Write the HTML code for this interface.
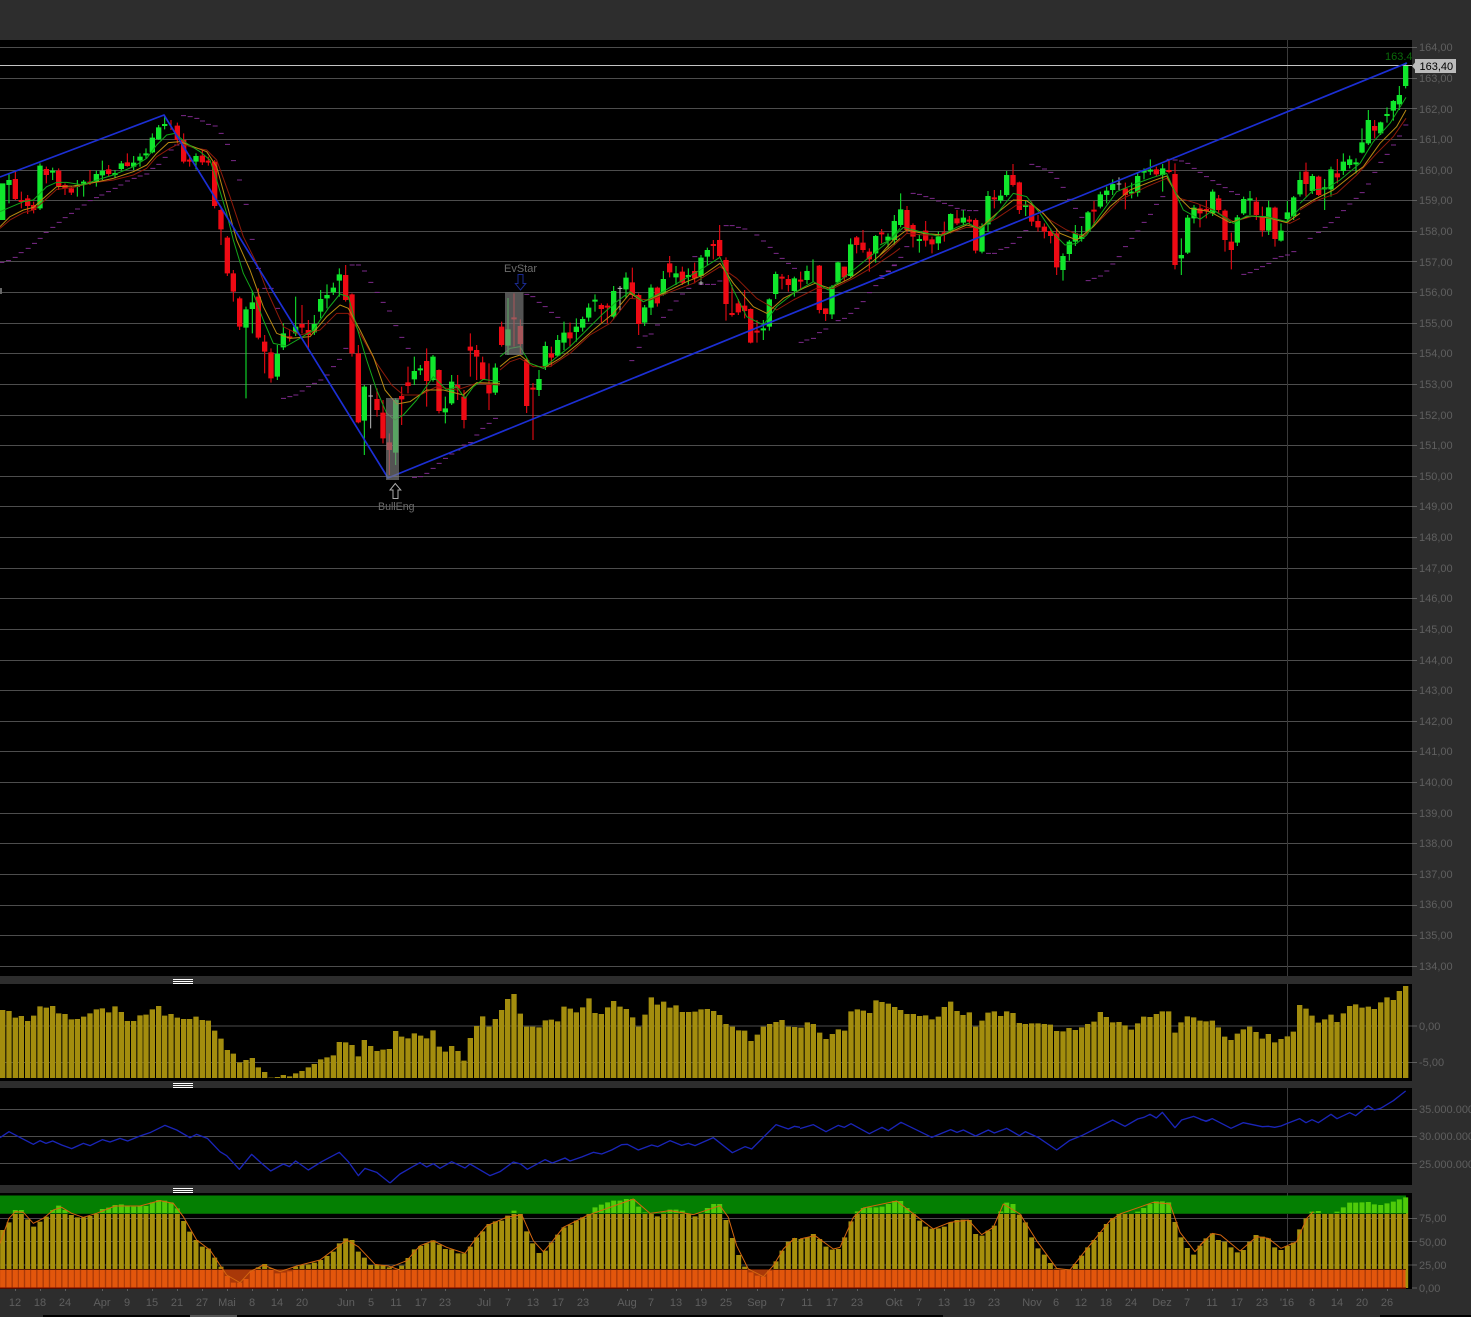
<!DOCTYPE html>
<html><head><meta charset="utf-8"><title>Chart</title>
<style>
html,body{margin:0;padding:0;background:#2d2d2d;width:1471px;height:1317px;overflow:hidden}
svg{display:block;font-family:"Liberation Sans",Arial,sans-serif;font-size:11px}
path,polyline{fill:none}
.g{stroke:#10e62c}.r{stroke:#ee0a14}.w{stroke-width:3.2}.b{stroke-width:16}
.s{stroke:#7d2a8c;stroke-width:3}
.mg,.mo,.mr{stroke-width:3;stroke-linejoin:round}
.mg{stroke:#13a81a}.mo{stroke:#b88a12}.mr{stroke:#8e1a0a}
.bl{stroke:#1a25b8;stroke-width:4;stroke-linejoin:round}
.ol{stroke:#d4660f;stroke-width:3;stroke-linejoin:round}
.ax{fill:#5f5f5f}
</style></head><body>
<svg width="1471" height="1317" viewBox="0 0 1471 1317" xmlns="http://www.w3.org/2000/svg">
<defs>
<clipPath id="cG"><rect x="0" y="1190" width="1412" height="23.5"/></clipPath>
<clipPath id="cO"><rect x="0" y="1213.5" width="1412" height="55.8"/></clipPath>
<clipPath id="cR"><rect x="0" y="1269.3" width="1405.5" height="19"/></clipPath>
<clipPath id="cO2"><rect x="1405.5" y="1269" width="6" height="19"/></clipPath>
<g id="bars4" style="stroke-width:15">
<path transform="translate(0 960) scale(.33333)" d="M8 810V984M27 787V984M46 750V984M64 750V984M83 778V984M101 800V984M120 785V984M139 770V984M158 750V984M176 737V984M195 750V984M214 765V984M232 772V984M251 772V984M270 768V984M289 760V984M307 747V984M326 743V984M345 735V984M364 733V984M382 738V984M401 740V984M420 738V984M438 738V984M457 727V984M476 720V984M494 722V984M513 727V984M532 745V984M551 783V984M569 815V984M588 840V984M607 860V984M625 866V984M644 893V984M663 920V984M682 948V984M700 968V984M719 968V984M738 957V984M757 932V984M775 922V984M794 912V984M813 925V984M832 940V984M850 938V984M869 934V984M887 920V984M906 915V984M925 913V984M943 908V984M962 900V984M981 888V984M1000 875V984M1018 850V984M1037 835V984M1056 840V984M1075 875V984M1093 893V984M1112 915V984M1131 915V984M1149 915V984M1168 922V984M1187 928V984"/>
<path transform="translate(390 984) scale(.33333)" d="M35 845V912M54 822V912M73 796V912M92 786V912M110 778V912M129 769V912M148 782V912M166 795V912M185 796V912M204 808V912M222 808V912M241 788V912M260 760V912M278 742V912M297 720V912M316 712V912M335 710V912M353 695V912M372 680V912M391 690V912M410 742V912M428 778V912M447 807V912M466 800V912M484 775V912M503 752V912M522 730V912M541 722V912M559 710V912M578 700V912M597 690V912M615 670V912M634 662V912M653 655V912M671 650V912M690 650V912M709 645V912M728 645V912M746 668V912M765 685V912M784 688V912M802 697V912M821 685V912M840 677V912M858 677V912M877 680V912M896 688V912M915 697V912M933 690V912M952 672V912M971 660V912M989 660V912M1008 708V912M1027 762V912M1046 813V912M1064 848V912M1083 865V912M1102 875V912M1120 878V912M1139 860V912M1158 832V912M1176 800V912M1195 773V912M1214 762V912"/>
<path transform="translate(800 984) scale(.33333)" d="M3 765V912M22 760V912M40 750V912M59 765V912M78 788V912M97 797V912M115 795V912M134 760V912M153 712V912M172 682V912M190 672V912M209 670V912M228 670V912M246 668V912M265 660V912M284 651V912M302 651V912M321 672V912M340 686V912M359 710V912M377 728V912M396 734V912M415 733V912M433 728V912M452 715V912M471 708V912M489 707V912M508 708V912M527 750V912M546 755V912M564 740V912M583 725V912M602 682V912M620 656V912M639 660V912M658 692V912M676 715V912M695 760V912M714 793V912M733 812V912M751 837V912M770 853V912M789 858V912M807 858V912M826 840V912M845 815V912M863 790V912M882 768V912M901 744V912M919 720V912M938 702V912M957 690V912M975 690V912M994 690V912M1013 683V912M1031 672V912M1050 660V912M1069 652V912M1087 652V912M1106 655V912M1125 714V912M1143 760V912M1162 792V912M1181 812V912M1200 785V912"/>
<path transform="translate(1200 960) scale(.33333)" d="M18 835V984M37 820V984M55 840V984M74 845V984M93 862V984M112 877V984M130 870V984M149 845V984M168 825V984M187 830V984M205 835V984M224 862V984M243 870V984M262 858V984M280 848V984M299 808V984M318 775V984M336 755V984M355 753V984M374 762V984M393 760V984M411 755V984M430 742V984M449 728V984M467 728V984M486 727V984M505 726V984M523 733V984M542 735V984M561 730V984M580 725V984M598 718V984M617 712V984"/>
</g>
</defs>

<!-- panels -->
<rect x="0" y="40" width="1412" height="936" fill="#000"/>
<rect x="0" y="984" width="1412" height="97" fill="#000"/>
<rect x="0" y="1088" width="1412" height="97" fill="#000"/>
<rect x="0" y="1193" width="1412" height="96" fill="#000"/>

<!-- main grid -->
<path stroke="#4d4d4d" stroke-width="1" d="M0 47.5H1412M0 78.5H1412M0 108.5H1412M0 139.5H1412M0 170.5H1412M0 200.5H1412M0 231.5H1412M0 261.5H1412M0 292.5H1412M0 323.5H1412M0 353.5H1412M0 384.5H1412M0 415.5H1412M0 445.5H1412M0 476.5H1412M0 506.5H1412M0 537.5H1412M0 568.5H1412M0 598.5H1412M0 629.5H1412M0 660.5H1412M0 690.5H1412M0 721.5H1412M0 751.5H1412M0 782.5H1412M0 813.5H1412M0 843.5H1412M0 874.5H1412M0 905.5H1412M0 935.5H1412M0 966.5H1412"/>
<path stroke="#3a3a3a" stroke-width="1" d="M1287.5 40V976M1287.5 984V1078M1287.5 1088V1185M1287.5 1193V1288"/>
<rect x="0" y="288" width="2" height="6" fill="#666"/>

<!-- Z1 -->
<g transform="translate(0 100) scale(.33333)">
<g transform="translate(-7 0)"><path class="s" d="M5 487h15M25 482h15M45 472h15M63 458h15M84 445h15M103 430h15M120 415h15M138 397h15M158 382h15M177 367h15M195 353h15M214 340h15M232 327h15M252 315h15M270 302h15M289 293h15M305 285h15M325 275h15M345 265h15M362 255h15M382 243h15M402 235h15M420 228h15M440 222h15M458 205h15M476 193h15M495 172h15M513 150h15M530 135h15M550 47h15M570 50h15M590 55h15M607 63h15M625 73h15M645 78h15M663 100h15M682 133h15M700 182h15M718 240h15M738 313h15M756 418h15M775 505h15M794 565h15M813 565h15M832 625h15M850 895h15M869 890h15M887 885h15M906 873h15M925 860h15M943 850h15M962 840h15M981 825h15M1000 800h15M1018 778h15M1037 745h15M1056 495h15M1075 495h15M1093 513h15M1112 547h15M1131 577h15M1149 607h15M1168 633h15M1187 677h15M1205 712h15M1224 745h15M1243 1132h15M1261 1130h15M1280 1120h15M1299 1105h15M1317 1090h15M1336 1075h15M1355 1062h15M1373 1050h15M1392 1035h15M1411 1028h15M1430 1005h15M1448 985h15M1467 970h15M1486 955h15"/></g>
<path class="g w" d="M27 222V310M120 190V330M158 203V240M232 240V290M251 240V290M289 212V260M307 182V240M345 210V235M364 183V212M401 168V210M420 160V200M438 145V175M457 100V160M476 75V120M494 50V88M588 160V208M738 620V895M757 572V700M832 735V840M850 670V750M887 590V708M943 645V705M962 570V655M981 553V625M1000 548V585M1018 505V590M1093 855V1065M1187 895V1095M1243 770V855M1261 795V825M1299 765V845M1336 890V970M1355 825V915M1486 790V885"/>
<path class="g b" d="M8 250V360M27 240V255M120 197V325M158 212V218M232 255V261M251 245V251M289 222V245M307 212V226M345 219V225M364 190V207M401 188V200M420 170V182M438 160V166M457 113V157M476 82V118M494 72V78M588 168V185M738 628V683M757 607V627M832 762V830M850 700V742M887 680V700M943 672V697M962 597V635M981 585V595M1000 563V577M1018 523V542M1093 860V962M1187 900V1058M1243 813V838M1261 805V811M1299 770V840M1336 925V937M1355 845V910M1486 803V878"/>
<path class="r w" d="M46 215V300M64 275V325M83 285V342M101 305V340M139 200V250M176 205V270M195 250V285M214 260V285M270 210V255M326 195V230M382 160V200M513 60V90M532 68V130M551 100V190M569 165V200M607 150V195M625 170V197M644 180V325M663 318V435M682 408V528M700 510V605M719 590V690M775 565V718M794 705V820M813 745V848M869 690V725M906 615V700M925 660V750M1037 495V605M1056 580V770M1075 735V970M1131 865V950M1149 900V1030M1168 1000V1125M1205 860V975M1224 800V880M1280 745V920M1317 808V940M1373 825V900M1392 870V985M1411 700V830M1430 735V840M1448 770V840M1467 790V930"/>
<path class="r b" d="M46 237V297M64 300V306M83 295V318M101 315V330M139 207V225M176 212V258M195 255V265M214 265V278M270 245V250M326 208V222M382 187V198M532 77V120M551 120V185M569 179V185M607 167V187M625 182V188M644 185V318M663 330V388M682 413V520M700 520V575M719 595V680M775 590V713M794 725V755M813 757V835M869 709V715M906 672V683M925 690V705M1037 525V600M1056 583V760M1075 760V967M1131 897V930M1149 938V1015M1168 1027V1050M1205 888V898M1224 847V858M1280 783V843M1317 810V933M1373 855V865M1392 890V960M1411 740V752M1430 750V770M1448 787V838M1467 855V880"/>
<path stroke="#bbb" stroke-width="3" d="M1112 855V985M1105 888H1119"/>
<polyline class="mr" points="0,385 30,360 70,338 100,330 130,305 170,268 220,262 280,248 340,240 400,225 440,205 470,170 510,145 540,130 580,143 620,150 650,180 690,290 730,410 770,490 800,570 850,680 900,705 960,690 1010,640 1045,640 1080,700 1130,790 1175,855 1210,885 1260,885 1310,860 1370,870 1430,850 1500,855"/>
<polyline class="mo" points="0,380 30,350 70,330 100,322 130,295 170,260 220,258 280,248 340,235 400,215 440,195 470,160 505,128 540,125 580,140 620,155 650,200 680,310 710,420 750,510 790,620 830,700 870,715 930,710 980,650 1020,615 1045,625 1080,690 1120,770 1155,870 1190,912 1230,905 1280,870 1330,870 1390,885 1430,848 1500,850"/>
<polyline class="mg" points="0,335 30,322 70,305 100,300 120,280 140,260 170,247 200,247 250,255 290,240 340,225 400,200 440,175 470,135 500,105 525,100 560,130 600,155 630,180 650,240 680,340 700,420 730,520 760,580 790,660 820,730 860,738 900,715 940,690 985,625 1020,582 1045,590 1070,680 1100,780 1130,870 1160,940 1185,960 1210,945 1250,900 1300,830 1340,870 1370,860 1395,895 1420,860 1450,838 1500,845"/>
</g>

<!-- Z5 -->
<g transform="translate(500 150) scale(.33333)">
<g transform="translate(-7 0)"><path class="s" d="M80 433h15M98 440h15M117 457h15M135 470h15M154 487h15M173 502h15M395 632h15M417 592h15M435 558h15M453 552h15M472 525h15M490 502h15M510 480h15M528 453h15M547 432h15M566 415h15M584 320h15M603 403h15M622 403h15M640 403h15M659 393h15M678 227h15M696 227h15M715 232h15M734 237h15M770 255h15M790 273h15M810 292h15M828 310h15M846 325h15M865 340h15M883 355h15M903 577h15M920 570h15M940 565h15M958 548h15M977 537h15M1014 512h15M1033 505h15M1052 490h15M1070 475h15M1089 455h15M1108 428h15M1127 407h15M1145 377h15M1164 363h15M1183 345h15"/></g>
<path class="g w" d="M24 444V615M117 660V738M136 575V660M173 555V620M192 515V600M229 505V575M248 500V545M266 460V515M285 433V485M341 408V508M378 367V445M434 465V528M453 403V495M490 363V437M528 348V405M565 355V405M603 315V390M622 293V345M790 510V570M808 445V542M827 365V447M883 380V440M921 347V402M939 328V395M996 405V507M1014 335V403M1052 265V382M1127 255V338M1164 250V292M1183 195V285"/>
<path class="g b" d="M24 538V587M117 687V720M136 588V650M173 570V617M192 548V578M229 530V546M248 507V533M266 473V503M285 449V455M341 423V500M378 383V418M434 472V518M453 413V473M490 387V433M528 370V382M565 375V381M603 323V378M622 300V320M790 535V541M808 448V530M827 372V432M883 385V423M921 363V390M996 410V493M1014 337V397M1052 283V378M1127 258V310M1164 260V272M1183 213V270"/>
<path class="r w" d="M5 515V590M42 430V590M61 508V610M80 624V789M99 699V870M154 590V650M210 518V590M304 460V518M322 460V520M397 353V445M416 430V555M472 410V470M509 318V382M547 350V405M584 338V400M640 270V328M659 225V322M678 322V512M696 405V500M715 447V495M734 420V505M752 475V580M771 510V578M846 372V418M865 375V425M902 365V420M958 345V490M977 475V513M1033 350V395M1070 258V310M1089 240V308M1108 295V365M1145 237V280"/>
<path class="r b" d="M5 530V585M42 502V508M61 528V582M80 630V768M99 713V719M154 610V623M210 547V565M304 465V477M322 467V473M397 397V435M416 435V522M472 413V460M509 340V367M547 365V398M584 363V385M640 282V288M659 270V318M678 330V462M696 489V495M715 460V487M734 467V483M752 477V578M771 542V548M846 380V386M865 387V405M902 389V395M958 347V480M977 475V492M1033 350V382M1070 262V285M1089 278V300M1108 305V328M1145 247V253"/>
<path stroke="#bbb" stroke-width="3" d="M360 408V483M353 415H367M603 392V405M596 399H610"/>
<polyline class="mr" points="0,660 30,635 60,625 100,650 150,650 210,610 270,555 330,520 390,445 450,450 500,430 580,400 660,350 710,385 770,445 830,480 880,450 950,415 1000,415 1060,385 1120,350 1180,310 1200,295"/>
<polyline class="mo" points="0,650 30,625 60,615 90,640 130,655 180,625 230,585 280,540 340,490 390,430 430,455 490,430 560,395 610,375 660,340 700,400 760,470 800,490 850,445 910,415 945,400 990,415 1050,385 1105,345 1165,295 1200,265"/>
<polyline class="mg" points="0,620 30,595 60,590 90,640 130,655 165,625 210,590 260,540 310,490 350,455 390,425 430,455 480,430 540,395 600,360 660,322 700,420 740,500 790,525 830,470 880,430 940,395 985,420 1010,400 1060,360 1110,320 1170,270 1200,235"/>
</g>

<!-- Z6 -->
<g transform="translate(880 140) scale(.33333)">
<g transform="translate(-7 0)"><path class="s" d="M5 415h15M25 395h15M42 377h15M62 352h15M80 320h15M99 160h15M118 163h15M137 170h15M156 175h15M175 183h15M193 190h15M212 197h15M231 205h15M250 210h15M268 212h15M287 212h15M325 340h15M343 340h15M362 328h15M380 323h15M399 310h15M418 292h15M437 272h15M455 73h15M474 80h15M493 87h15M512 97h15M530 115h15M549 142h15M568 178h15M586 205h15M605 232h15M624 422h15M642 415h15M661 408h15M680 393h15M698 372h15M717 350h15M736 320h15M755 295h15M773 273h15M792 247h15M811 223h15M829 193h15M848 170h15M867 58h15M885 60h15M904 63h15M923 70h15M942 85h15M960 97h15M979 110h15M998 122h15M1016 133h15M1035 143h15M1054 155h15M1072 163h15M1091 403h15M1110 398h15M1129 388h15M1147 380h15M1166 370h15M1185 355h15M1203 350h15M1222 345h15M1241 335h15"/></g>
<path class="g w" d="M62 160V262M118 283V338M175 275V330M212 220V280M250 210V255M306 250V340M324 153V275M362 150V190M380 93V170M437 182V228M549 340V422M568 300V362M586 255V318M605 258V305M624 213V280M661 155V205M680 140V190M698 118V165M755 128V175M773 98V170M792 85V118M811 58V105M848 72V155M904 295V405M923 225V342M942 195V250M998 148V228M1072 225V318M1091 170V225M1110 153V225M1166 182V285M1203 250V305M1222 183V248M1241 168V240"/>
<path class="g b" d="M62 208V255M118 297V303M175 290V310M212 222V272M250 233V248M306 258V335M324 168V253M362 167V182M380 105V165M437 195V201M549 348V390M568 305V342M586 280V305M605 283V297M624 217V275M661 163V200M680 152V165M698 132V150M755 155V161M773 108V158M792 92V98M811 89V95M848 85V105M904 345V355M923 233V338M942 203V235M998 155V220M1072 232V308M1091 177V220M1110 175V181M1166 202V272M1203 272V302M1222 217V237M1241 172V228"/>
<path class="r w" d="M81 198V278M99 250V322M137 243V320M156 290V340M193 245V305M231 210V255M268 228V255M287 235V340M343 150V205M399 72V140M418 125V222M455 185V258M474 225V275M493 250V295M512 265V310M530 265V405M642 183V258M736 128V208M829 80V108M867 60V100M885 70V388M960 195V262M979 180V235M1016 165V222M1035 208V335M1054 278V388M1129 172V240M1147 200V290M1185 200V320"/>
<path class="r b" d="M81 210V270M99 255V290M137 272V302M156 298V313M193 277V283M231 235V250M268 239V245M287 240V332M343 172V178M399 105V135M418 127V210M455 195V245M474 243V262M493 260V275M512 273V288M530 280V382M642 209V215M736 145V165M829 88V103M867 90V96M885 102V375M960 205V220M979 207V213M1016 175V210M1035 212V300M1054 305V330M1129 185V225M1147 232V272M1185 203V297"/>
<path stroke="#bbb" stroke-width="3" d="M717 112V150M710 132H724"/>
<polyline class="mr" points="0,355 40,318 80,280 130,285 190,285 260,262 300,262 350,235 410,195 460,195 510,240 560,270 610,290 660,240 720,180 800,140 860,115 900,175 950,190 1000,210 1060,245 1120,228 1170,235 1230,250 1260,235"/>
<polyline class="mo" points="0,345 40,300 80,270 130,280 190,285 260,255 300,265 350,220 400,180 440,182 490,220 540,280 590,300 640,260 690,200 750,150 820,122 860,108 890,165 930,205 990,215 1050,248 1110,228 1160,232 1220,248 1260,220"/>
<polyline class="mg" points="0,315 30,300 70,262 120,275 180,290 230,262 265,250 300,268 340,235 400,160 440,170 480,220 520,280 555,315 590,310 620,285 660,225 710,155 770,130 820,112 860,100 880,145 910,210 960,238 1000,210 1060,250 1100,228 1160,230 1220,245 1260,205"/>
</g>

<!-- Z2 -->
<g transform="translate(1200 0) scale(.33333)">
<g transform="translate(-7 0)"><path class="s" d="M330 715h15M355 697h15M375 682h15M393 668h15M412 652h15M430 632h15M449 612h15M468 595h15M486 578h15M505 552h15M524 517h15M542 487h15M561 463h15M580 435h15M598 408h15M617 375h15"/></g>
<path class="g w" d="M300 515V590M337 522V582M374 537V630M393 500V590M430 460V525M449 467V505M468 475V520M486 385V460M505 330V435M542 365V405M561 322V368M580 300V362M598 258V330M617 188V265"/>
<path class="g b" d="M300 540V583M337 528V573M374 562V568M393 508V568M430 485V513M449 478V495M468 487V493M486 427V458M505 360V430M542 367V400M561 342V348M580 303V332M598 285V313M617 198V258"/>
<path class="r w" d="M318 488V590M356 527V588M412 477V550M524 360V415"/>
<path class="r b" d="M318 515V552M356 530V585M412 520V532M524 378V392"/>
<polyline class="mr" points="300,630 340,605 410,580 470,525 530,460 580,410 618,355"/>
<polyline class="mo" points="300,625 340,600 400,570 450,530 490,500 540,430 590,380 618,330"/>
<polyline class="mg" points="300,610 340,570 380,565 420,540 480,490 520,425 570,370 618,292"/>
</g>

<!-- current price line + trend -->
<path stroke="#c4c4c4" stroke-width="1" d="M0 65.5H1412"/>
<polyline stroke="#1c2fd4" stroke-width="1.7" stroke-linejoin="round" points="0,177 164,115 388,478 1407,63" style="fill:none"/>

<!-- highlights -->
<rect x="386" y="398" width="13" height="82" fill="#808080" opacity=".65"/>
<rect x="505" y="292.5" width="18.5" height="62.5" fill="#808080" opacity=".65"/>
<polygon points="395.3,483.5 390,490 393,490 393,498.5 398,498.5 398,490 400.8,490" fill="#000" stroke="#aaa" stroke-width="1"/>
<text x="378" y="510" fill="#6c6c6c" font-size="10.6">BullEng</text>
<text x="504" y="272" fill="#6c6c6c">EvStar</text>
<polygon points="520.5,290 515.3,283.5 518,283.5 518,274.5 523,274.5 523,283.5 525.8,283.5" fill="#000" stroke="#1a2a90" stroke-width="1"/>
<text x="1385" y="60" fill="#0a6a0a">163.4</text>

<!-- Panel 2 -->
<path stroke="#4d4d4d" stroke-width="1" d="M0 1026H1412M0 1062.5H1412"/>
<g stroke="#a38d0e" stroke-width="16">
<path transform="translate(0 960) scale(.33333)" d="M8 150V354M27 153V354M46 173V354M64 168V354M83 183V354M101 167V354M120 139V354M139 143V354M158 138V354M176 160V354M195 162V354M214 178V354M232 177V354M251 170V354M270 160V354M289 148V354M307 145V354M326 157V354M345 139V354M364 156V354M382 183V354M401 183V354M420 166V354M438 164V354M457 148V354M476 138V354M494 167V354M513 162V354M532 173V354M551 177V354M569 177V354M588 170V354M607 180V354M625 182V354M644 212V354M663 236V354M682 270V354M700 281V354M719 307V354M738 300V354M757 294V354M775 322V354M794 336V354M813 353V354M832 351V354M850 345V354M869 349V354M887 340V354M906 333V354M925 322V354M943 312V354M962 298V354M981 292V354M1000 286V354M1018 246V354M1037 247V354M1056 255V354M1075 289V354M1093 240V354M1112 258V354M1131 273V354M1149 269V354M1168 267V354M1187 213V354"/>
<path transform="translate(390 984) scale(.33333)" d="M35 158V282M54 163V282M73 148V282M92 155V282M110 163V282M129 139V282M148 188V282M166 203V282M185 186V282M204 201V282M222 230V282M241 162V282M260 126V282M278 97V282M297 128V282M316 105V282M335 78V282M353 45V282M372 30V282M391 89V282M410 128V282M428 128V282M447 130V282M466 109V282M484 107V282M503 112V282M522 68V282M541 74V282M559 85V282M578 70V282M597 43V282M615 87V282M634 90V282M653 70V282M671 51V282M690 68V282M709 75V282M728 100V282M746 128V282M765 92V282M784 40V282M802 62V282M821 53V282M840 71V282M858 64V282M877 84V282M896 84V282M915 83V282M933 76V282M952 75V282M971 81V282M989 93V282M1008 120V282M1027 128V282M1046 139V282M1064 140V282M1083 171V282M1102 152V282M1120 128V282M1139 120V282M1158 114V282M1176 108V282M1195 128V282M1214 129V282"/>
<path transform="translate(800 984) scale(.33333)" d="M3 131V282M22 115V282M40 120V282M59 146V282M78 165V282M97 150V282M115 136V282M134 140V282M153 82V282M172 76V282M190 80V282M209 87V282M228 49V282M246 54V282M265 59V282M284 69V282M302 78V282M321 90V282M340 90V282M359 96V282M377 94V282M396 106V282M415 98V282M433 69V282M452 53V282M471 81V282M489 93V282M508 85V282M527 128V282M546 110V282M564 86V282M583 82V282M602 96V282M620 82V282M639 87V282M658 117V282M676 120V282M695 118V282M714 118V282M733 120V282M751 122V282M770 141V282M789 142V282M807 132V282M826 138V282M845 130V282M863 120V282M882 113V282M901 84V282M919 99V282M938 115V282M957 114V282M975 124V282M994 137V282M1013 118V282M1031 98V282M1050 99V282M1069 90V282M1087 82V282M1106 82V282M1125 146V282M1143 115V282M1162 97V282M1181 100V282M1200 110V282"/>
<path transform="translate(1200 960) scale(.33333)" d="M18 184V354M37 182V354M55 202V354M74 230V354M93 240V354M112 221V354M130 208V354M149 200V354M168 216V354M187 236V354M205 222V354M224 247V354M243 237V354M262 229V354M280 215V354M299 135V354M318 146V354M336 167V354M355 188V354M374 178V354M393 164V354M411 186V354M430 160V354M449 138V354M467 133V354M486 143V354M505 140V354M523 147V354M542 127V354M561 112V354M580 120V354M598 93V354M617 78V354"/>
</g>

<!-- Panel 3 -->
<path stroke="#4d4d4d" stroke-width="1" d="M0 1109.5H1412M0 1136.5H1412M0 1163.5H1412"/>
<polyline class="bl" transform="translate(0 960) scale(.33333)" points="0,533 27,515 65,535 100,553 120,542 138,550 158,543 185,555 215,566 250,550 270,557 307,539 330,546 360,535 383,543 420,528 450,518 495,496 530,510 570,533 590,523 622,535 660,575 680,587 718,628 755,583 785,610 812,633 850,612 868,620 887,603 925,630 965,605 1018,577 1045,605 1075,647 1095,625 1130,637 1170,669"/>
<polyline class="bl" transform="translate(390 984) scale(.33333)" points="0,597 30,570 70,547 90,536 110,549 130,539 150,553 185,533 225,552 240,540 300,575 330,563 370,534 392,540 412,556 465,527 487,537 525,522 540,531 575,519 610,505 635,510 665,498 695,482 712,481 745,498 785,483 803,488 840,470 875,484 895,478 915,485 970,461 1027,506 1065,488 1085,495 1120,460 1158,422 1195,435 1213,427 1230,430"/>
<polyline class="bl" transform="translate(800 984) scale(.33333)" points="0,434 40,422 78,443 115,424 133,430 153,419 208,449 246,430 265,440 303,415 395,460 452,437 471,445 490,438 527,456 565,438 583,447 620,433 658,455 676,443 714,460 770,498 808,470 845,455 938,408 975,427 1013,405 1032,400 1050,391 1069,402 1087,385 1125,431 1145,408 1181,397 1218,412 1230,408"/>
<polyline class="bl" transform="translate(1200 960) scale(.33333)" points="0,478 18,483 37,476 93,505 130,488 187,500 205,499 224,502 243,498 262,490 299,476 318,488 336,479 355,488 393,463 411,476 449,458 467,467 505,437 523,450 542,445 580,422 617,393"/>

<!-- Panel 4 -->
<path stroke="#4d4d4d" stroke-width="1" d="M0 1218.5H1412M0 1241.5H1412M0 1265H1412"/>
<rect x="0" y="1195.5" width="1406" height="18" fill="#047f02"/>
<rect x="0" y="1269.3" width="1406" height="18.7" fill="#a83808"/>
<path fill="#860000" d="M224 1269.5H251L240 1283H232Z"/>
<path fill="#860000" d="M275 1269.5H294L285 1273H280Z"/>
<path fill="#860000" d="M748 1269.5H774L765 1278H756Z"/>
<g clip-path="url(#cG)" stroke="#4fcb0a"><use href="#bars4"/></g>
<g clip-path="url(#cO)" stroke="#a68f0c"><use href="#bars4"/></g>
<g clip-path="url(#cR)" stroke="#e2560c"><use href="#bars4"/></g>
<g clip-path="url(#cO2)" stroke="#a68f0c"><use href="#bars4"/></g>
<path stroke="#065e04" stroke-width="1" d="M0 1213.5H1406"/>
<path stroke="#5a1a00" stroke-width="1" d="M0 1269.5H1406"/>
<path stroke="#8a1500" stroke-width="1.2" d="M0 1288H1406"/>
<polyline class="ol" transform="translate(0 960) scale(.33333)" points="0,850 27,775 46,755 70,757 100,790 130,775 160,750 185,742 215,760 250,772 290,760 345,738 420,738 480,722 520,730 550,770 590,840 630,870 680,945 720,968 750,935 790,915 840,935 890,918 960,900 1000,870 1040,840 1075,860 1125,913 1165,918 1200,930"/>
<polyline class="ol" transform="translate(390 984) scale(.33333)" points="0,850 50,830 90,785 130,770 170,790 225,808 260,760 290,725 350,700 395,692 430,770 460,803 485,775 520,730 590,695 730,645 780,688 840,680 910,692 990,665 1015,700 1040,785 1075,855 1120,878 1150,845 1180,795 1214,762"/>
<polyline class="ol" transform="translate(800 984) scale(.33333)" points="0,765 45,755 100,795 120,790 160,700 190,672 290,651 350,697 400,735 450,715 505,708 545,752 580,730 610,660 660,690 710,770 770,853 810,858 860,795 930,710 960,690 1060,655 1110,660 1140,745 1185,803 1218,765"/>
<polyline class="ol" transform="translate(1200 960) scale(.33333)" points="0,855 37,820 62,825 120,873 170,830 205,835 243,865 290,845 320,775 340,755"/>

<!-- separators handles -->
<g fill="#fff">
<rect x="173" y="979" width="20" height="1"/><rect x="173" y="981" width="20" height="1"/><rect x="173" y="983" width="20" height="1"/>
<rect x="173" y="1083" width="20" height="1"/><rect x="173" y="1085" width="20" height="1"/><rect x="173" y="1087" width="20" height="1"/>
<rect x="173" y="1188" width="20" height="1"/><rect x="173" y="1190" width="20" height="1"/><rect x="173" y="1192" width="20" height="1"/>
</g>

<!-- axis ticks -->
<path stroke="#5f5f5f" stroke-width="1" d="M1412 47.5h5M1412 78.5h5M1412 108.5h5M1412 139.5h5M1412 170.5h5M1412 200.5h5M1412 231.5h5M1412 261.5h5M1412 292.5h5M1412 323.5h5M1412 353.5h5M1412 384.5h5M1412 415.5h5M1412 445.5h5M1412 476.5h5M1412 506.5h5M1412 537.5h5M1412 568.5h5M1412 598.5h5M1412 629.5h5M1412 660.5h5M1412 690.5h5M1412 721.5h5M1412 751.5h5M1412 782.5h5M1412 813.5h5M1412 843.5h5M1412 874.5h5M1412 905.5h5M1412 935.5h5M1412 966.5h5M1412 1026h5M1412 1062.5h5M1412 1109.5h5M1412 1136.5h5M1412 1163.5h5M1412 1218.5h5M1412 1241.5h5M1412 1265h5M1412 1288h5M15.5 1289v2M40.5 1289v2M65.5 1289v2M102.5 1289v2M127.5 1289v2M152.5 1289v2M177.5 1289v2M202.5 1289v2M227.5 1289v2M252.5 1289v2M277.5 1289v2M302.5 1289v2M346.5 1289v2M371.5 1289v2M396.5 1289v2M421.5 1289v2M445.5 1289v2M484.5 1289v2M508.5 1289v2M533.5 1289v2M558.5 1289v2M583.5 1289v2M627.5 1289v2M651.5 1289v2M676.5 1289v2M701.5 1289v2M726.5 1289v2M757.5 1289v2M782.5 1289v2M807.5 1289v2M832.5 1289v2M857.5 1289v2M894.5 1289v2M919.5 1289v2M944.5 1289v2M969.5 1289v2M994.5 1289v2M1032.5 1289v2M1056.5 1289v2M1081.5 1289v2M1106.5 1289v2M1131.5 1289v2M1162.5 1289v2M1187.5 1289v2M1212.5 1289v2M1237.5 1289v2M1262.5 1289v2M1287.5 1289v2M1312.5 1289v2M1337.5 1289v2M1362.5 1289v2M1387.5 1289v2"/>

<!-- price labels -->
<g class="ax">
<text x="1419" y="51">164,00</text><text x="1419" y="82">163,00</text><text x="1419" y="113">162,00</text><text x="1419" y="143">161,00</text><text x="1419" y="174">160,00</text><text x="1419" y="204">159,00</text><text x="1419" y="235">158,00</text><text x="1419" y="266">157,00</text><text x="1419" y="296">156,00</text><text x="1419" y="327">155,00</text><text x="1419" y="357">154,00</text><text x="1419" y="388">153,00</text><text x="1419" y="419">152,00</text><text x="1419" y="449">151,00</text><text x="1419" y="480">150,00</text><text x="1419" y="510">149,00</text><text x="1419" y="541">148,00</text><text x="1419" y="572">147,00</text><text x="1419" y="602">146,00</text><text x="1419" y="633">145,00</text><text x="1419" y="664">144,00</text><text x="1419" y="694">143,00</text><text x="1419" y="725">142,00</text><text x="1419" y="755">141,00</text><text x="1419" y="786">140,00</text><text x="1419" y="817">139,00</text><text x="1419" y="847">138,00</text><text x="1419" y="878">137,00</text><text x="1419" y="908">136,00</text><text x="1419" y="939">135,00</text><text x="1419" y="970">134,00</text>
<text x="1419" y="1030">0,00</text><text x="1419" y="1066">-5,00</text>
<text x="1419" y="1113">35.000.000</text><text x="1419" y="1140">30.000.000</text><text x="1419" y="1168">25.000.000</text>
<text x="1419" y="1222">75,00</text><text x="1419" y="1246">50,00</text><text x="1419" y="1269">25,00</text><text x="1419" y="1292">0,00</text>
</g>
<polygon points="1412,66 1415,62.5 1415,69.5" fill="#bcbcbc"/>
<rect x="1415" y="59" width="41" height="14" fill="#bcbcbc"/>
<text x="1419.5" y="70" fill="#000">163,40</text>

<!-- date labels -->
<g class="ax" text-anchor="middle">
<text x="15" y="1306">12</text><text x="40" y="1306">18</text><text x="65" y="1306">24</text><text x="102" y="1306">Apr</text><text x="127" y="1306">9</text><text x="152" y="1306">15</text><text x="177" y="1306">21</text><text x="202" y="1306">27</text><text x="227" y="1306">Mai</text><text x="252" y="1306">8</text><text x="277" y="1306">14</text><text x="302" y="1306">20</text><text x="346" y="1306">Jun</text><text x="371" y="1306">5</text><text x="396" y="1306">11</text><text x="421" y="1306">17</text><text x="445" y="1306">23</text><text x="484" y="1306">Jul</text><text x="508" y="1306">7</text><text x="533" y="1306">13</text><text x="558" y="1306">17</text><text x="583" y="1306">23</text><text x="627" y="1306">Aug</text><text x="651" y="1306">7</text><text x="676" y="1306">13</text><text x="701" y="1306">19</text><text x="726" y="1306">25</text><text x="757" y="1306">Sep</text><text x="782" y="1306">7</text><text x="807" y="1306">11</text><text x="832" y="1306">17</text><text x="857" y="1306">23</text><text x="894" y="1306">Okt</text><text x="919" y="1306">7</text><text x="944" y="1306">13</text><text x="969" y="1306">19</text><text x="994" y="1306">23</text><text x="1032" y="1306">Nov</text><text x="1056" y="1306">6</text><text x="1081" y="1306">12</text><text x="1106" y="1306">18</text><text x="1131" y="1306">24</text><text x="1162" y="1306">Dez</text><text x="1187" y="1306">7</text><text x="1212" y="1306">11</text><text x="1237" y="1306">17</text><text x="1262" y="1306">23</text><text x="1287" y="1306">'16</text><text x="1312" y="1306">8</text><text x="1337" y="1306">14</text><text x="1362" y="1306">20</text><text x="1387" y="1306">26</text>
</g>

<!-- bottom strip -->
<rect x="43" y="1315" width="147" height="2" fill="#000"/>
<rect x="190" y="1315" width="47" height="2" fill="#555"/>
<rect x="237" y="1315" width="706" height="2" fill="#000"/>
<rect x="1380" y="1315" width="91" height="2" fill="#000"/>
</svg>
</body></html>
